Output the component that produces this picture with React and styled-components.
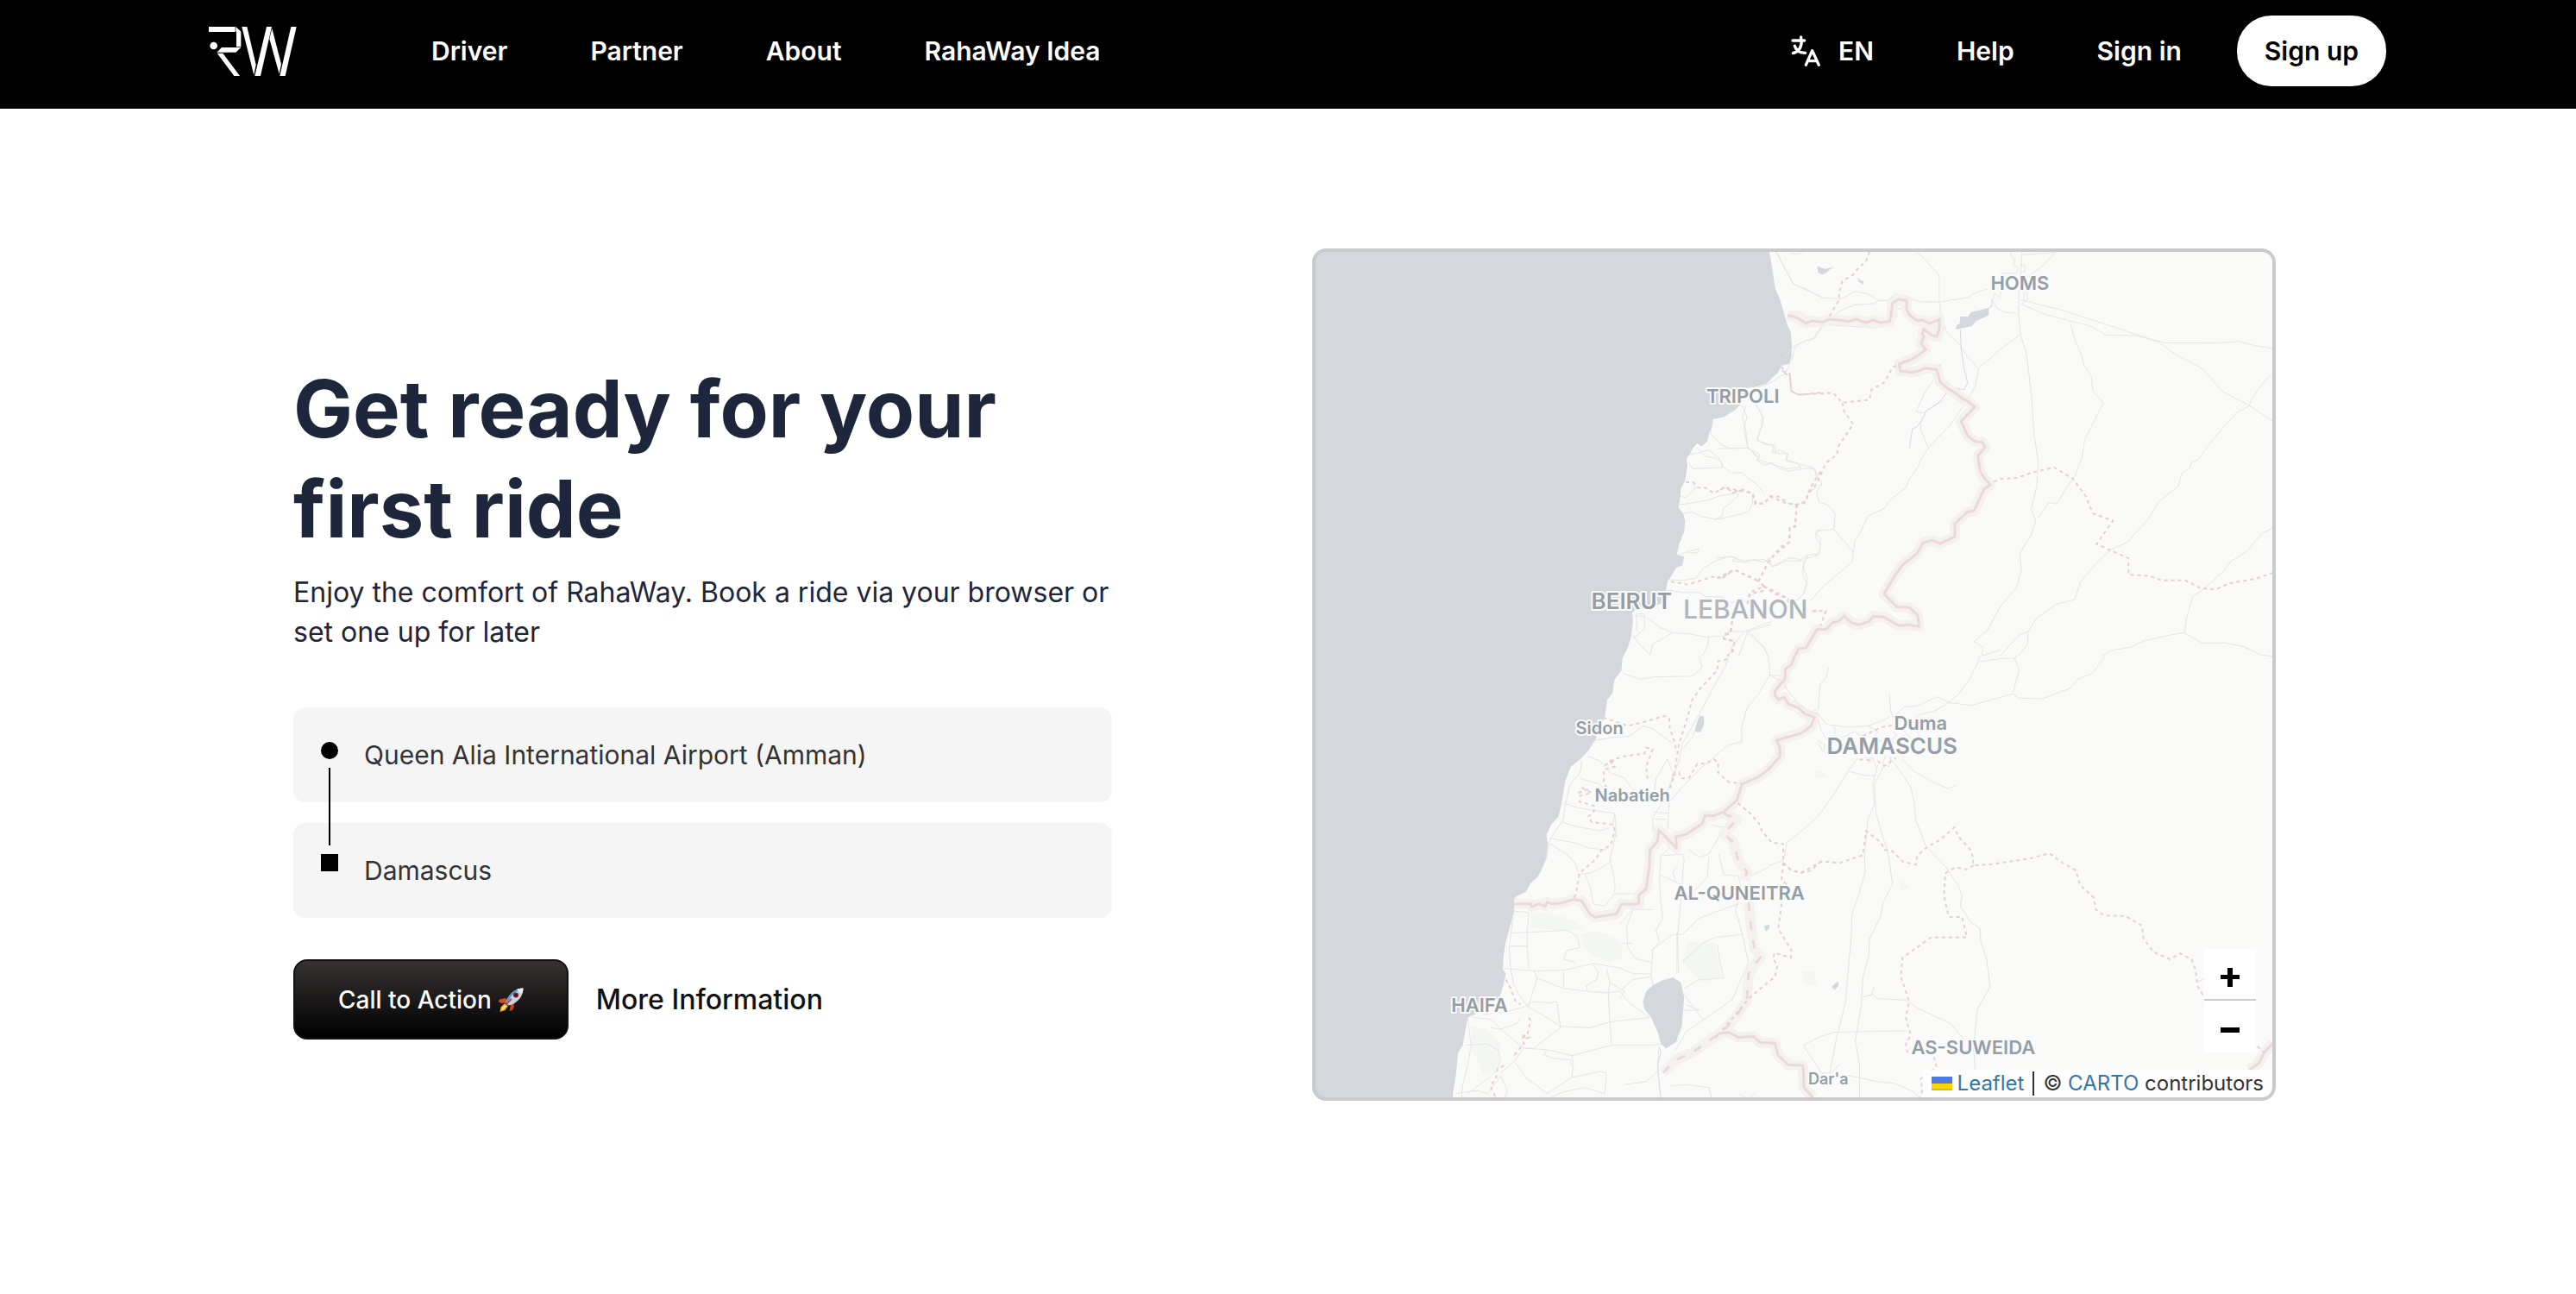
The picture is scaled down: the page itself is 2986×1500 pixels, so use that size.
import { useState } from 'react';
import styled, { createGlobalStyle } from 'styled-components';

const links = ['Driver', 'Partner', 'About', 'RahaWay Idea'];

// Each tile keeps its own drawing units, the matrix puts it on the map
const tiles = [
  {
    id: 'nw',
    matrix: 'matrix(0.38265 0 0 0.33333 1510 270)',
    water: [
      'M0 0H1405L1412 60 1420 110 1424 140 1430 190 1445 230 1455 270 1468 320 1478 345 1481 390 1480 430 1473 455 1450 462 1440 485 1425 500 1405 524 1370 535 1345 540 1330 590 1310 615 1275 640 1243 648 1240 670 1230 700 1225 725 1208 742 1195 732 1183 745 1172 770 1162 785 1165 810 1158 860 1145 890 1142 930 1138 955 1152 975 1158 1000 1155 1040 1140 1080 1133 1118 1155 1125 1150 1155 1130 1165 1115 1195 1105 1210 1100 1240 1085 1290 1010 1306 998 1320 1000 1350 995 1400 985 1440 968 1480 965 1520 940 1560H0Z',
    ],
    roads: [
      'M1432 60L1455 110 1485 178 1530 200 1568 222',
      'M1568 330L1545 368 1515 378 1490 400 1482 440 1460 490 1410 525 1370 540',
      'M1328 595L1345 640 1336 680 1348 745 1380 780 1382 800',
      'M1375 598L1393 640 1390 670 1375 720 1400 735 1425 738 1422 765 1445 755 1470 768 1465 790 1500 800 1510 820',
      'M1240 660L1235 700 1250 712 1265 735 1290 748 1348 748 1385 770 1375 790 1400 808 1420 798 1440 818 1470 828 1530 818 1550 822 1556 850',
      'M1172 770L1210 762 1215 775 1255 785 1268 800 1270 815 1180 820 1170 800',
      'M1190 745L1210 760 1230 755 1260 782 1275 815 1300 835 1330 832 1345 850 1370 870 1395 900',
      'M1140 915L1160 920 1190 888 1180 870',
      'M1140 945L1180 938 1225 930 1260 915 1310 905 1320 910 1300 935 1275 955 1270 985 1250 995 1205 985 1180 970 1152 975',
      'M1250 997L1300 985 1350 970 1362 940 1362 915',
      'M1135 1120L1165 1108 1200 1098 1195 1112 1165 1112',
      'M1110 1205L1150 1208 1190 1200 1215 1165 1250 1140 1290 1125 1315 1130 1300 1140 1340 1145 1365 1135 1395 1145 1415 1130 1420 1160 1440 1150 1470 1130 1510 1135 1530 1120 1565 1115 1568 1060 1555 1045 1565 1030',
      'M1530 1120L1515 1160 1528 1200 1520 1250 1500 1275',
      'M1100 1240L1150 1250 1200 1250 1220 1265 1270 1265 1285 1285 1340 1280',
      'M1002 1330L1040 1335 1080 1370 1120 1390 1180 1395 1220 1405 1280 1400 1290 1385 1340 1385 1420 1350',
      'M998 1395L1020 1430 1052 1465 1060 1430 1120 1390',
      'M1335 1385L1300 1440 1280 1500',
      'M1342 1385L1395 1440 1410 1470',
      'M1000 1410L1035 1375 1035 1325 1010 1325 1012 1385',
      'M1230 1405L1225 1440 1210 1470',
    ],
    borders: ['M1468 285L1485 290 1500 286 1505 297 1520 300 1530 312 1545 308 1568 310'],
    regions: [
      'M1450 465L1462 490 1475 495 1480 550 1500 562 1530 560 1568 555',
      'M1160 866L1185 868 1195 885 1220 886 1245 905 1275 885 1305 900 1330 892 1362 905 1370 942 1400 940 1415 915 1440 916 1475 942 1500 945 1525 930 1535 890 1568 830',
      'M1495 945L1492 1020 1475 1025 1474 1075 1450 1090 1415 1135 1380 1210 1395 1228 1392 1245 1355 1255 1345 1300',
      'M1115 1212L1165 1222 1215 1205 1240 1195 1270 1200 1305 1170 1340 1190 1380 1210',
      'M1395 1228L1430 1255 1470 1270 1475 1300',
      'M1545 1314H1568',
      'M1300 1350L1295 1390 1275 1395 1275 1410 1308 1420 1300 1455 1285 1470',
      'M1270 1200L1300 1175M1300 905L1340 892',
    ],
  },
  {
    id: 'ne',
    matrix: 'matrix(0.42092 0 0 0.33333 1990 270)',
    water: [
      'M670 290L690 292 700 275 720 270 748 260 748 285 735 295 715 305 700 325 680 330 657 336 660 320 668 315Z',
      'M276 115L288 122 300 125 322 118 308 130 302 138 290 145 278 138Z',
      'M386 155L395 165 403 168 403 180 390 170Z',
      'M608 458L616 456 615 472 606 480Z',
    ],
    roads: [
      'M162 65L190 130 212 180 245 195 290 225 340 230 380 203 415 212 445 235 470 235 490 212 515 220 540 232 560 240 610 240 690 225 715 205 745 195',
      'M548 65L575 95 612 150 612 240 618 300 635 350 665 385 690 430 718 470',
      'M205 70L220 74 235 68',
      'M340 235L330 240M190 430L210 395 245 375 270 365 300 310 340 270 380 250 435 245 445 235',
      'M310 320L370 325 430 330 480 320 495 290 490 265 520 262',
      'M808 65L812 85 822 95 815 110 830 120 825 140 780 140',
      'M840 65L838 110 832 180 830 270 835 350 852 420 865 560 873 700 885 800 880 880 865 960 878 1000 865 1050 833 1115 838 1170 825 1230 780 1300 745 1380 708 1420 732 1440 730 1470',
      'M932 68L900 110 860 150M842 76L930 68',
      'M836 112H848V135H836M850 190L856 230 840 245M845 200V240',
      'M760 230L765 210 778 225 783 205M757 230L770 262 790 275 825 280',
      'M835 232L960 272 1100 330 1160 355 1200 372 1235 382 1370 383 1438 377 1480 392 1530 401',
      'M835 245L900 282 970 305 1030 325 1070 355 1155 357 1215 378 1260 420 1340 475 1390 550 1465 600 1535 658',
      'M972 310L985 370 1005 430 1010 460 1030 495 1035 550 1064 590 1040 650 1012 720 1005 780 985 845 960 890 935 942 913 938 885 990',
      'M1530 490L1510 510 1470 580 1465 602 1430 625 1420 640 1370 710 1340 760 1325 788 1305 800 1300 820 1280 835 1270 880 1215 935 1190 990 1130 1075 1085 1100 1050 1140 1000 1215 985 1275 935 1290 880 1340 857 1385 830 1400 780 1470',
      'M1530 1025L1500 1045 1460 1105 1412 1145 1395 1175 1340 1238 1310 1262 1292 1340 1287 1388',
      'M1532 1472L1500 1468 1450 1438 1400 1425 1335 1425 1285 1390 1250 1397 1175 1418 1140 1440 1090 1450 1060 1470',
      'M833 355L780 405 720 470 712 530 690 580 640 670 610 710 582 748 560 790 555 810 530 855 520 885 475 930 460 958 415 985 395 1040 380 1070 375 1110 372 1145 300 1220 255 1280',
      'M582 748L560 680 565 640M595 512L570 560 548 622 570 625 625 580',
      'M270 820L278 850 290 870 275 900 280 935 305 945 325 975 322 1030 275 1035 270 1055 285 1080 280 1118 240 1135',
      'M322 1030L375 1110M290 870L255 900',
      'M80 600L70 640 80 690 85 748M108 598L128 640 125 670 110 720 140 735 160 740 160 765 195 768 188 790 215 800 268 818',
      'M0 1130L40 1125 70 1140 130 1135 155 1160 190 1140 240 1140 235 1185 248 1220 235 1260 215 1280',
      'M85 1385L150 1360M85 1385L60 1470M90 1387L130 1440 140 1470',
      'M0 750L85 748 120 790 190 820 230 815',
      'M857 1385L855 1430 830 1470M730 1470L780 1450',
    ],
    rivers: [
      'M670 336L672 400 680 470 690 520 680 545 660 540 640 545 610 590 575 620 570 640 550 675 538 680 530 748',
      'M757 232V255L748 262',
    ],
    borders: [
      'M195 288L210 290 225 298 245 314 260 306 290 310 310 300 350 305 360 308 385 300 410 312 430 303 450 312 475 308 480 280 483 245 500 230 522 235 522 265 530 285 550 305 565 302 585 315 613 300 612 335 605 360 590 355 570 335 565 350 570 360 562 385 575 405 560 420 535 440 502 455 504 480 535 485 555 480 575 470 605 475 615 520 635 540 660 560 675 575 690 585 710 605 672 655 690 705 710 725 730 728 738 745 718 775 725 830 735 850 752 876 735 890 708 965 690 970 655 1010 655 1055 615 1080 590 1068 567 1078 560 1095 550 1115 510 1155 490 1190 460 1255 495 1300 530 1302 553 1330 556 1368 530 1362 500 1365 480 1350 460 1335 430 1332 420 1350 390 1362 370 1355 350 1332 335 1350 318 1355 300 1378 275 1378 265 1400 245 1442 225 1445 215 1470',
    ],
    regions: [
      'M420 65L410 100 385 128 375 145 345 168 338 200 335 235 318 270 305 300',
      'M180 480L200 490 205 552 225 562 320 556 345 590 420 580 425 545 460 520 485 465 500 460',
      'M345 590L350 620 375 665 335 740 330 770 300 800 275 870 250 910 240 940 220 944 190 940 145 916 130 940 108 942 98 905 60 895 20 885 0 900',
      'M220 944L214 1022 200 1025 200 1075 145 1135 115 1210 130 1228 90 1250 82 1300',
      'M0 1200L48 1170 115 1210M130 1228L195 1270 197 1295M262 1314H300L285 1365',
      'M762 865L780 855 825 852 870 832 928 815 980 855 1015 915 1035 975 1090 1000 1045 1082 1132 1130 1133 1188 1190 1192 1225 1208 1290 1208 1330 1235 1372 1240 1410 1218 1480 1203 1530 1182',
      'M42 1350L38 1390 20 1400 20 1412 48 1418 45 1450 35 1470',
    ],
  },
  {
    id: 'sw',
    matrix: 'matrix(0.38265 0 0 0.33801 1510 760)',
    parks: [
      'M840 955L870 945 905 948 950 965 970 1010 965 1040 930 1050 880 1030 850 990Z',
      'M1165 980L1250 985 1255 1040 1270 1100 1210 1120 1150 1050Z',
      'M515 1270L560 1280 600 1330 590 1420 550 1440 505 1330Z',
      'M690 880L760 885 830 910 850 940 790 945 690 930Z',
    ],
    water: [
      'M0 0H968L964 40 945 70 938 130 922 150 915 210 895 260 885 290 865 325 840 355 812 380 795 430 785 500 775 550 752 580 738 615 742 640 738 690 725 730 710 760 690 780 675 810 645 825 640 870 630 920 615 980 608 1030 606 1075 615 1090 608 1130 595 1175 540 1220 500 1240 490 1300 485 1335 470 1360 465 1430 455 1500 455 1568H0Z',
      'M1122 1102L1145 1120 1155 1170 1148 1270 1130 1325 1100 1346 1085 1330 1075 1290 1055 1240 1035 1210 1030 1185 1040 1150 1060 1130 1090 1112Z',
      'M1202 205L1215 208 1215 235 1205 262 1188 260 1195 225Z',
      'M1397 926L1414 922 1412 936 1402 945Z',
    ],
    roads: [
      'M970 60L1020 80 1070 72 1180 70 1210 40 1200 0',
      'M1410 0L1415 65 1380 130 1345 180 1328 250 1330 295 1290 305 1210 380 1150 450 1110 500 1105 595',
      'M1290 15L1250 95 1210 180 1150 300 1140 360 1120 420 1090 500 1060 555 1060 600',
      'M885 290L935 280 990 275 1030 240 1060 250 1090 275 1120 300',
      'M1415 65L1455 70 1465 110',
      'M865 345L900 360 930 400 975 420 1000 460',
      'M840 420L900 440 930 470M845 360L840 400 810 440 795 510 790 560 760 610 745 640 740 690 710 760',
      'M790 505L830 520 880 530 945 540 940 575 950 620M785 570L830 585 900 600 930 590',
      'M745 625L820 640 870 660 920 665M750 645L800 680 825 710 835 750',
      'M835 750L870 745 900 730 940 700M855 750L870 790 880 850 915 858 945 815 1010 815 1020 800',
      'M945 540L950 600 930 700 945 770 945 810',
      'M1085 685L1150 680 1155 700 1150 760 1145 840 1135 960 1138 1090',
      'M1085 685L1080 760 1085 850 1090 900 1070 940 1080 980 1060 1010 1055 1090 1060 1130',
      'M1080 750L1120 770 1145 785M1135 720L1120 740 1130 775',
      'M1150 600L1110 660 1090 680M1170 665L1200 690 1230 680 1260 620 1280 590 1240 580M1260 680L1275 750 1320 755 1330 810 1310 870 1330 950 1350 1050 1300 1180 1210 1250 1160 1290 1130 1350',
      'M1230 690L1225 760 1190 800 1150 840M1055 1010L1120 955 1150 955 1200 900 1270 870 1320 850',
      'M1150 1050L1210 985 1250 965 1330 955M1255 990L1265 1060 1275 1105 1200 1110 1155 1140',
      'M1150 1215L1200 1215 1160 1195M1155 1160L1180 1200 1215 1250',
      'M640 875L685 880 680 940 680 1000 685 1075M635 950L740 945 800 940 830 960 840 1000 800 1010 790 1040 825 1050',
      'M625 995H680M608 1072L700 1080 790 1078 880 1055 960 1070 1000 1090 1055 1090',
      'M640 870L625 1000 630 1075 640 1130 660 1170 680 1200',
      'M700 1080L710 1105 690 1180 680 1200 740 1240 780 1270 870 1275 930 1255 1050 1240',
      'M710 1105L790 1140 860 1150 925 1155 960 1150 1000 1110 1055 1100M790 1078L790 1135M880 1060L895 1085 890 1110 860 1130 862 1150',
      'M920 1070L930 1120 925 1155 930 1255 935 1330M960 1150L990 1190 1050 1240M930 1120L975 1150 960 1175',
      'M680 1200L620 1220 545 1230M680 1200L700 1185 745 1190 770 1185 780 1275 740 1310 700 1345 670 1345 640 1390 600 1430',
      'M670 1345L740 1350 815 1370 935 1335 1060 1335 1085 1330M735 1370L760 1380 810 1385 815 1405M740 1350L730 1370',
      'M500 1240L510 1340 500 1400 485 1470 480 1520M515 1240L570 1245 610 1290 670 1345M570 1275L600 1280 650 1260 660 1240',
      'M495 1335L560 1330 590 1350 600 1380 590 1420 560 1450 500 1500M465 1500L530 1490 560 1500 600 1440 620 1490 610 1520',
      'M640 1390L680 1450 740 1500 815 1445 820 1400 815 1370M815 1445L900 1425 920 1430 915 1500 850 1480 790 1495 740 1520M1115 1475L1160 1470 1230 1480 1240 1520',
      'M970 1470L1040 1460 1075 1425 1078 1350M1320 1500L1350 1520 1370 1495',
      'M1355 755L1411 725M1120 640L1090 620M1060 535L1105 540M1065 560H1100M1195 230L1180 280 1150 320',
      'M1000 870L980 930 985 1000 1010 1040 1055 1050M965 985H1000M960 920L1000 870 1060 870',
      'M1105 355L1070 420 1060 500M1105 355L1120 400 1118 430',
      'M1133 950V1092',
    ],
    rivers: ['M1078 1340L1085 1360 1075 1400 1078 1450 1085 1520'],
    borders: [
      'M1490 0L1480 30 1462 45 1460 80 1430 120 1430 135 1440 150 1458 142 1470 165 1500 178 1522 200 1550 210 1540 240 1510 265 1470 278 1435 290 1445 315 1445 345 1410 390 1380 415 1330 440 1315 495 1275 535 1245 548 1218 548 1210 575 1160 612 1130 620 1132 660 1090 610 1078 597 1075 635 1052 665 1050 720 1040 800 1018 820 1018 850 965 852 950 885 885 896 870 885 845 840 820 835 780 848 755 850 740 845 735 858 715 850 695 860 690 850 640 850',
      'M1250 1310L1260 1295 1290 1290 1320 1308 1365 1305 1385 1325 1430 1328 1440 1370 1470 1402 1515 1405 1518 1480 1545 1515',
    ],
    dashes: [
      'M1275 540L1290 548 1315 560 1275 610 1305 640 1318 700 1345 740 1338 770',
      'M1350 845L1358 930 1368 1005 1388 1030 1350 1090 1345 1180 1310 1240 1270 1290 1230 1320 1180 1360 1130 1385 1090 1430',
    ],
    regions: [
      'M1285 12L1258 18 1255 50 1205 110 1180 150 1160 230 1140 300 1130 370 1125 410 1110 460',
      'M910 212L985 240 1030 228 1095 206 1110 215 1112 250 1128 300 1130 330',
      'M930 360L970 345 1035 335 1040 315 1060 320 1050 350 1040 380 1045 430',
      'M930 360L945 380 912 390 912 440 925 455M845 452L875 470 840 480 838 500 885 515 880 540 865 550 875 570 940 578 945 600 932 650 905 665 885 700 838 745 830 800 822 830',
      'M1120 410L1140 400 1145 420 1170 418 1195 370 1220 370 1245 355 1258 365 1258 400 1290 433 1328 437',
      'M1318 505L1355 540 1385 580 1390 600 1420 640 1455 645 1455 710 1450 770 1470 785',
      'M1455 710L1480 735 1510 744 1540 735 1568 705',
      'M1450 850L1440 935 1480 1010 1478 1035 1428 1018 1425 1040 1438 1060 1430 1100 1360 1165 1340 1190 1270 1285',
      'M615 1110L630 1140 645 1185 660 1195M685 1240L690 1250 680 1300 665 1310 670 1330 640 1370M610 1405L590 1415 585 1450 568 1475 585 1515',
      'M665 1300L685 1308 665 1316M835 470L870 455M915 375L950 355',
    ],
  },
  {
    id: 'se',
    matrix: 'matrix(0.38265 0 0 0.33801 2050 760)',
    parks: [
      'M100 1080L140 1085 145 1125 110 1130Z',
      'M135 395L165 400 180 415 145 418ZM395 770L425 790 400 805Z',
    ],
    water: ['M190 1135L210 1115 212 1130 200 1145Z'],
    roads: [
      'M180 40L175 70 155 100 150 180 125 195 90 165 45 100M0 65L45 90',
      'M125 195L150 200 175 235 240 245 300 240 340 225 365 210M150 220L160 260 185 300M200 240V270L190 290',
      'M365 130L370 190 375 210 410 175 450 172 510 140 545 160 612 170 740 130 755 145 830 147 915 110 935 80 980 60 1020 0',
      'M640 0L630 30 605 85 575 130 540 165 500 190 460 200 440 215',
      'M640 20L700 10 745 8 758 50 740 125M750 0L740 20',
      'M300 240L330 260 320 280 350 300M220 280L260 260 285 280 270 310M375 260L390 270 370 290 385 300M410 260L430 280M440 250L455 270',
      'M270 350L240 395 200 470 150 550 110 590 55 640 45 700 0 720',
      'M240 395L290 410 325 410M330 375L315 440 320 510 300 560 290 690 292 740 275 810 252 885 250 960 232 1190 205 1310 185 1430',
      'M350 375L320 440 325 540 345 620 360 670 375 780 345 850 340 890 305 970 303 1030 285 1100 280 1200 262 1320 275 1400 275 1520',
      'M365 350L385 375 430 450 440 500 445 560 475 650 540 730 575 790 585 820 580 860 610 910 640 935 642 980 660 1040 670 1135 632 1210 620 1340 625 1420',
      'M400 350L440 395 500 435 545 455 565 445',
      'M285 1170L315 1160 330 1175 415 1180 455 1210 550 1260 595 1320M318 1135L310 1165',
      'M415 1285L200 1290 155 1305 105 1335 160 1430 190 1430 215 1400M240 1438L330 1460 380 1465 440 1495 460 1520',
      'M315 350L325 380M355 340L345 370 365 380 370 345M290 350L315 352 300 370',
      'M150 290L170 305 165 330 150 300M1295 1120L1317 1108',
    ],
    borders: ['M1526 1328L1500 1360 1485 1395 1455 1420'],
    regions: [
      'M45 710L70 738 100 742 160 705 215 710 285 683 295 600 340 640 350 665 375 670 405 705 445 716 450 685 480 655 520 630 562 588 575 620 615 670 620 718 670 715 730 705 790 695 850 677 890 710 930 735 942 785 985 830 990 870 1015 890 1080 892 1130 925 1135 970 1165 1015 1215 1040 1245 1020 1280 1040 1292 1075 1298 1130 1317 1168',
      'M620 718L600 732 565 725 535 745 530 820 545 895 585 895 600 965 490 966 405 1035 400 1100 425 1185 415 1240 430 1300 415 1330 420 1360',
      'M500 1375L508 1410 460 1450 465 1490 455 1520M1480 1338L1500 1360',
      'M285 275L340 245 378 238M275 355L310 358M330 360L350 378 385 350',
    ],
  },
];

const places = [
  { name: 'HOMS', x: 2341, y: 336, size: 22 },
  { name: 'TRIPOLI', x: 2020, y: 467, size: 22 },
  { name: 'BEIRUT', x: 1891, y: 706, size: 26 },
  { name: 'LEBANON', x: 2023, y: 717, size: 30, faint: true },
  { name: 'Sidon', x: 1854, y: 851, size: 20 },
  { name: 'Nabatieh', x: 1892, y: 929, size: 20 },
  { name: 'Duma', x: 2226, y: 846, size: 22 },
  { name: 'DAMASCUS', x: 2193, y: 874, size: 26 },
  { name: 'AL-QUNEITRA', x: 2016, y: 1043, size: 22 },
  { name: 'HAIFA', x: 1715, y: 1173, size: 22 },
  { name: 'AS-SUWEIDA', x: 2287, y: 1222, size: 22 },
  { name: "Dar'a", x: 2119, y: 1257, size: 18 },
];

function Logo() {
  return (
    <svg width="102" height="57" viewBox="0 0 306 171" fill="#fff" role="img" aria-label="RahaWay">
      <path d="M0 0H92V18H0Z" />
      <path d="M94 0L112 17V70H96V18L94 16Z" />
      <path d="M45 72H112L94 89H28Z" />
      <path d="M29 92H49L108 171H88Z" />
      <circle cx="17" cy="66" r="13" />
      <path d="M115 0H133L164 132 157 168Z" />
      <path d="M160 171L201 0H219L180 171Z" />
      <path d="M220 6L252 130 245 164 211 42Z" />
      <path d="M247 171L286 0H305L266 171Z" />
    </svg>
  );
}

function LanguageIcon() {
  return (
    <svg
      width="35"
      height="36"
      viewBox="36 43 105 108"
      fill="none"
      stroke="#fff"
      strokeWidth="10"
      strokeLinecap="round"
      strokeLinejoin="round"
      aria-hidden="true"
    >
      <path d="M42 61H83M71 49V61M73 61C73 84 64 100 43 105M49 80C54 94 66 104 86 104" />
      <path d="M88 146L110 96L133 146M97 132H124" />
    </svg>
  );
}

function RocketIcon() {
  return (
    <svg width="29" height="28" viewBox="0 0 58 56" aria-hidden="true">
      <path d="M16 24L2 27 0 33 8 36 20 34Z" fill="#e2462b" />
      <path d="M28 38L25 54 32 52 36 44 35 34Z" fill="#d93a22" />
      <path d="M14 36L22 42 15 52 3 56 5 45Z" fill="#f4a62a" />
      <path d="M14 40L18 43 12 50 6 53 8 46Z" fill="#ffe75e" />
      <path d="M57 1C42 1 29 9 18 28L16 35L23 41L31 39C47 31 57 18 57 1Z" fill="#c9d3dc" />
      <path d="M57 1C42 1 29 9 18 28L16 35L19 37C28 17 40 8 57 1Z" fill="#5b93cf" />
      <path d="M57 1C51 1 46 2 42 4L53 14C56 10 57 6 57 1Z" fill="#eef2f5" />
      <circle cx="40" cy="17" r="6" fill="#7d1f24" />
      <circle cx="40" cy="17" r="3" fill="#20181c" />
      <path d="M28 24L17 37L20 39L31 27Z" fill="#d9442e" />
    </svg>
  );
}

function MapTile({ tile }) {
  return (
    <g transform={tile.matrix}>
      {tile.parks?.map((d) => <Park key={d} d={d} />)}
      {tile.roads.map((d) => <Road key={d} d={d} />)}
      {tile.rivers?.map((d) => <River key={d} d={d} />)}
      {tile.water.map((d) => <Water key={d} d={d} />)}
      {tile.borders.map((d) => <BorderGlow key={d} d={d} />)}
      {tile.dashes?.map((d) => <BorderGlow key={d} d={d} />)}
      {tile.borders.map((d) => <Border key={d} d={d} />)}
      {tile.dashes?.map((d) => <Border key={d} d={d} $dashed />)}
      {tile.regions.map((d) => <Region key={d} d={d} />)}
    </g>
  );
}

function App() {
  const [pickup, setPickup] = useState('Queen Alia International Airport (Amman)');
  const [dropoff, setDropoff] = useState('Damascus');

  return (
    <>
      <GlobalStyle />
      <Header>
        <LogoLink href="#home">
          <Logo />
        </LogoLink>
        <Nav>
          {links.map((link) => (
            <NavLink key={link} href="#nav">{link}</NavLink>
          ))}
        </Nav>
        <Actions>
          <LanguageButton type="button">
            <LanguageIcon />
            EN
          </LanguageButton>
          <NavLink href="#help">Help</NavLink>
          <Account>
            <NavLink href="#signin">Sign in</NavLink>
            <SignUp href="#signup">Sign up</SignUp>
          </Account>
        </Actions>
      </Header>
      <Main>
        <Content>
          <Title>Get ready for your first ride</Title>
          <Subtitle>
            Enjoy the comfort of RahaWay. Book a ride via your browser or set one up for later
          </Subtitle>
          <Form>
            <Field
              aria-label="Pickup location"
              value={pickup}
              onChange={(e) => setPickup(e.target.value)}
            />
            <Field
              aria-label="Destination"
              value={dropoff}
              onChange={(e) => setDropoff(e.target.value)}
            />
            <Route>
              <Dot />
              <Line />
              <Square />
            </Route>
          </Form>
          <Buttons>
            <Primary type="button">
              Call to Action
              <RocketIcon />
            </Primary>
            <Secondary href="#more">More Information</Secondary>
          </Buttons>
        </Content>
        <MapBox>
          <MapSvg viewBox="1521 288 1116 988" preserveAspectRatio="xMidYMid slice">
            {tiles.map((tile) => (
              <MapTile key={tile.id} tile={tile} />
            ))}
            {places.map((place) => (
              <Place key={place.name} x={place.x} y={place.y} $size={place.size} $faint={place.faint}>
                {place.name}
              </Place>
            ))}
          </MapSvg>
          <Zoom>
            <ZoomButton type="button" aria-label="Zoom in">
              <svg width="22" height="22" viewBox="0 0 22 22">
                <path d="M8 0H14V8H22V13H14V22H8V13H0V8H8Z" />
              </svg>
            </ZoomButton>
            <ZoomButton type="button" aria-label="Zoom out">
              <svg width="22" height="22" viewBox="0 0 22 22">
                <path d="M0 8H22V14H0Z" />
              </svg>
            </ZoomButton>
          </Zoom>
          <Attribution>
            <svg width="24" height="16" viewBox="0 0 12 8" aria-hidden="true">
              <path fill="#4C7BE1" d="M0 0h12v4H0z" />
              <path fill="#FFD500" d="M0 4h12v3H0z" />
              <path fill="#E0BC00" d="M0 7h12v1H0z" />
            </svg>
            <a href="#leaflet">Leaflet</a>
            <Divider />
            <span>
              © <a href="#carto">CARTO</a> contributors
            </span>
          </Attribution>
          <Frame />
        </MapBox>
      </Main>
    </>
  );
}

const GlobalStyle = createGlobalStyle`
  * {
    box-sizing: border-box;
  }

  body {
    margin: 0;
    background-color: #fff;
    font-family: Inter, sans-serif;
  }

  a {
    text-decoration: none;
  }
`;

const Header = styled.header`
  display: flex;
  align-items: center;
  padding: 18px 220px 26px 242px;
  background-color: #000;
`;

const LogoLink = styled.a`
  display: flex;
  margin-right: 156px;
`;

const Nav = styled.nav`
  display: flex;
  gap: 96px;
`;

const NavLink = styled.a`
  font-size: 30px;
  font-weight: 600;
  color: #fff;
`;

const Actions = styled.div`
  display: flex;
  align-items: center;
  gap: 96px;
  margin-left: auto;
`;

const LanguageButton = styled.button`
  display: flex;
  align-items: center;
  gap: 20px;
  padding: 0;
  border: 0;
  background: none;
  font: 600 30px Inter, sans-serif;
  color: #fff;
`;

const Account = styled.div`
  display: flex;
  align-items: center;
  gap: 64px;
`;

const SignUp = styled.a`
  padding: 0 32px;
  border-radius: 40px;
  background-color: #fff;
  font-size: 30px;
  font-weight: 600;
  line-height: 82px;
  color: #000;
`;

const Main = styled.main`
  display: grid;
  grid-template-columns: 949fr 1116fr;
  gap: 232px;
  align-items: start;
  padding: 162px 348px 0 340px;
`;

const Content = styled.div`
  padding-top: 128px;
`;

const Title = styled.h1`
  margin: 0;
  font-size: 92px;
  font-weight: 700;
  line-height: 116px;
  color: #1e263b;
`;

const Subtitle = styled.p`
  margin: 16px 0 64px;
  font-size: 32px;
  line-height: 46px;
  color: #1e263b;
`;

const Form = styled.form`
  position: relative;
  display: flex;
  flex-direction: column;
  gap: 24px;
`;

const Field = styled.input`
  width: 100%;
  height: 110px;
  padding: 0 82px;
  border: 0;
  border-radius: 14px;
  background-color: #f5f5f5;
  font: 400 30px Inter, sans-serif;
  color: #333;
`;

const Route = styled.div`
  position: absolute;
  top: 40px;
  left: 32px;
  display: flex;
  flex-direction: column;
  align-items: center;
  gap: 10px;
`;

const Dot = styled.span`
  width: 20px;
  height: 20px;
  border-radius: 50%;
  background-color: #000;
`;

const Line = styled.span`
  width: 2px;
  height: 90px;
  background-color: #000;
`;

const Square = styled.span`
  width: 20px;
  height: 20px;
  background-color: #000;
`;

const Buttons = styled.div`
  display: flex;
  align-items: center;
  gap: 32px;
  margin-top: 48px;
`;

const Primary = styled.button`
  display: flex;
  align-items: center;
  gap: 8px;
  height: 93px;
  padding: 0 50px;
  border: 2px solid #111;
  border-radius: 16px;
  background: linear-gradient(#363232, #000);
  font: 500 28px Inter, sans-serif;
  color: #fff;
`;

const Secondary = styled.a`
  font-size: 32px;
  font-weight: 500;
  color: #111;
`;

const MapBox = styled.div`
  position: relative;
  overflow: hidden;
  aspect-ratio: 1116 / 988;
  border-radius: 16px;
  background-color: #fafaf8;
`;

const MapSvg = styled.svg`
  display: block;
  width: 100%;
  height: 100%;
`;

const Frame = styled.div`
  position: absolute;
  inset: 0;
  border: 4px solid #c9cacb;
  border-radius: 16px;
  pointer-events: none;
`;

const Water = styled.path`
  fill: #d4d8dc;
`;

const Park = styled.path`
  fill: #f4f6f4;
`;

const Road = styled.path`
  fill: none;
  stroke: #e4e5e5;
  stroke-width: 1px;
  vector-effect: non-scaling-stroke;
`;

const River = styled(Road)`
  stroke: #d4d8dc;
`;

const Border = styled.path`
  fill: none;
  stroke: #ead8db;
  stroke-width: 3px;
  stroke-linejoin: round;
  stroke-dasharray: ${(props) => (props.$dashed ? '10 12' : 'none')};
  vector-effect: non-scaling-stroke;
`;

const BorderGlow = styled.path`
  fill: none;
  stroke: #f5f1f1;
  stroke-width: 12px;
  stroke-linejoin: round;
  vector-effect: non-scaling-stroke;
`;

const Region = styled.path`
  fill: none;
  stroke: #e6cfd3;
  stroke-width: 2px;
  stroke-dasharray: 4 4;
  vector-effect: non-scaling-stroke;
`;

const Place = styled.text`
  font-size: ${(props) => props.$size}px;
  font-weight: ${(props) => (props.$faint ? 500 : 600)};
  text-anchor: middle;
  fill: ${(props) => (props.$faint ? '#b0b6bb' : '#949ea9')};
  stroke: #fafaf8;
  stroke-width: 4px;
  stroke-linejoin: round;
  paint-order: stroke;
`;

const Zoom = styled.div`
  position: absolute;
  right: 23px;
  bottom: 56px;
  display: flex;
  flex-direction: column;
  border-radius: 4px;
  overflow: hidden;
`;

const ZoomButton = styled.button`
  display: flex;
  align-items: center;
  justify-content: center;
  width: 60px;
  height: 60px;
  padding: 8px 0 0;
  border: 0;
  background-color: #fff;

  &:first-child {
    border-bottom: 2px solid #ccc;
  }
`;

const Attribution = styled.div`
  position: absolute;
  right: 4px;
  bottom: 4px;
  display: flex;
  align-items: center;
  padding: 0 10px;
  background-color: rgba(255, 255, 255, 0.8);
  font-size: 24px;
  line-height: 32px;
  color: #333;

  svg {
    margin-right: 6px;
  }

  a {
    color: #3078a8;
  }
`;

const Divider = styled.span`
  width: 2px;
  height: 28px;
  margin: 0 10px;
  background-color: #333;
`;

export default App;
